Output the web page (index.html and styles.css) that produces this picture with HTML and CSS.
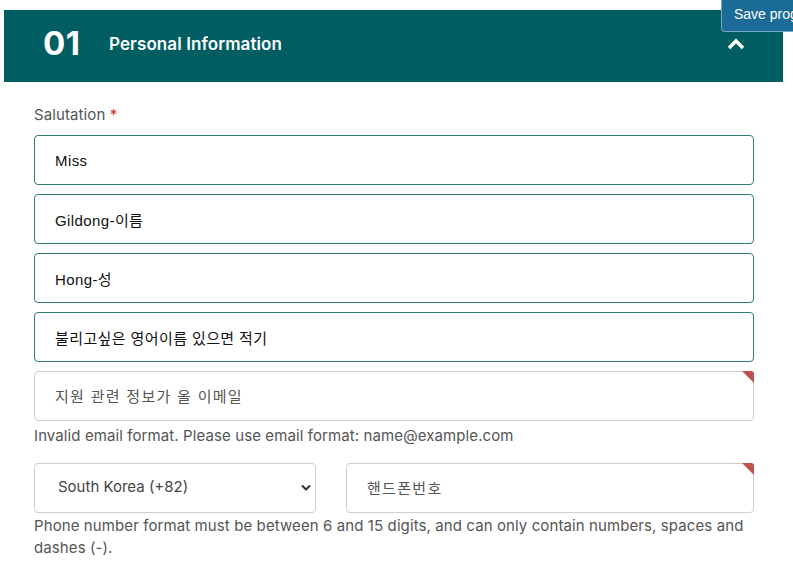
FILE: index.html
```html
<!DOCTYPE html>
<html lang="ko">
<head>
  <meta charset="UTF-8" />
  <title>Application Form</title>
  <meta name="viewport" content="width=device-width, initial-scale=1.0" />
  <link rel="stylesheet" href="styles.css">
</head>
<body>

  <button class="save-btn" type="button">Save progress</button>

  <section class="step">
    <div class="step-header">
      <span class="step-num">01</span>
      <h2 class="step-title">Personal Information</h2>
      <svg class="step-toggle" width="18" height="12" viewBox="0 0 18 12">
        <path d="M2 10 L9 3 L16 10" fill="none" stroke="#fff" stroke-width="3.4" stroke-linejoin="miter"/>
      </svg>
    </div>

    <form class="step-body">
      <label class="field-label">Salutation <span class="req">*</span></label>
      <input class="field filled" type="text" value="Miss" />
      <input class="field filled" type="text" value="Gildong-이름" />
      <input class="field filled" type="text" value="Hong-성" />
      <input class="field filled" type="text" value="불리고싶은 영어이름 있으면 적기" />

      <div class="field-wrap invalid">
        <input class="field" type="text" placeholder="지원 관련 정보가 올 이메일" />
      </div>
      <p class="field-help">Invalid email format. Please use email format: name@example.com</p>

      <div class="phone-row">
        <div class="select-wrap">
          <select class="field select">
            <option>South Korea (+82)</option>
          </select>
          <svg class="select-arrow" width="10" height="7" viewBox="0 0 10 7">
            <path d="M1 1.5 L5 5.5 L9 1.5" fill="none" stroke="#333" stroke-width="2"/>
          </svg>
        </div>
        <div class="field-wrap invalid">
          <input class="field" type="text" placeholder="핸드폰번호" />
        </div>
      </div>
      <p class="field-help wide">Phone number format must be between 6 and 15 digits, and can only contain numbers, spaces and dashes (-).</p>
    </form>
  </section>

</body>
</html>
```

FILE: styles.css
```css
:root {
  --teal: #005e63;
  --teal-border: #2f7c76;
  --grey-border: #cfcfcf;
  --save-blue: #1a6b98;
  --error: #c0504d;
  --ui-font: Inter, "Noto Sans CJK KR", sans-serif;
  --input-font: "Liberation Sans", Arial, "Noto Sans CJK KR", sans-serif;
}

* {
  margin: 0;
  padding: 0;
  box-sizing: border-box;
}

html, body {
  background: #fff;
  font-family: var(--ui-font);
  color: #333;
}

body {
  padding: 10px 10px 0 4px;
  overflow: hidden;
}

.save-btn {
  position: absolute;
  top: -2px;
  left: 721px;
  width: 72px;
  height: 34px;
  padding: 0 0 2px 12px;
  text-align: left;
  white-space: nowrap;
  overflow: hidden;
  background: var(--save-blue);
  color: #fff;
  border: 1px solid #7aa6c2;
  border-right: none;
  border-radius: 0 0 0 4px;
  font-family: var(--input-font);
  font-size: 14px;
}

.step-header {
  display: flex;
  align-items: center;
  height: 72px;
  width: 779px;
  background: var(--teal);
  color: #fff;
  padding: 0 38px 6px 39px;
}

.step-num {
  font-size: 33px;
  font-weight: 700;
  width: 66px;
  letter-spacing: 0.5px;
}

.step-title {
  flex: 1;
  font-size: 17px;
  font-weight: 600;
  letter-spacing: 0.1px;
  margin-top: 2px;
}

.step-toggle {
  margin-top: 2px;
}

.step-body {
  display: flex;
  flex-direction: column;
  gap: 9px;
  width: 720px;
  margin: 22px 0 0 30px;
}

.field-label {
  font-size: 15px;
  color: #555;
  line-height: 22px;
  letter-spacing: 0.1px;
}

.req {
  color: #d02b1f;
}

.field {
  width: 100%;
  height: 50px;
  padding: 0 20px;
  border: 1px solid var(--grey-border);
  border-radius: 4px;
  font-family: var(--input-font);
  font-size: 15px;
  letter-spacing: 0.4px;
  color: #111;
  background: #fff;
  outline: none;
}

.field::placeholder {
  color: #555;
  letter-spacing: 1.3px;
}

.field.filled {
  border-color: var(--teal-border);
}

.field-wrap {
  position: relative;
}

.field-wrap.invalid::after {
  content: "";
  position: absolute;
  top: 0;
  right: 0;
  width: 0;
  height: 0;
  border-top: 12px solid var(--error);
  border-left: 12px solid transparent;
  border-top-right-radius: 3px;
}

.field-help {
  font-size: 15px;
  color: #555;
  line-height: 22px;
  letter-spacing: 0.1px;
  margin-top: -5px;
}

.field-help.wide {
  margin-top: -7px;
}

.phone-row {
  display: flex;
  gap: 30px;
  margin-top: 7px;
}

.select-wrap {
  position: relative;
  width: 282px;
  flex: none;
}

.phone-row .field-wrap {
  flex: 1;
}

.select {
  appearance: none;
  padding: 0 0 3px 23px;
  font-family: var(--ui-font);
  letter-spacing: 0;
  color: #444;
}

.select-arrow {
  position: absolute;
  right: 5px;
  top: 21px;
}
```
